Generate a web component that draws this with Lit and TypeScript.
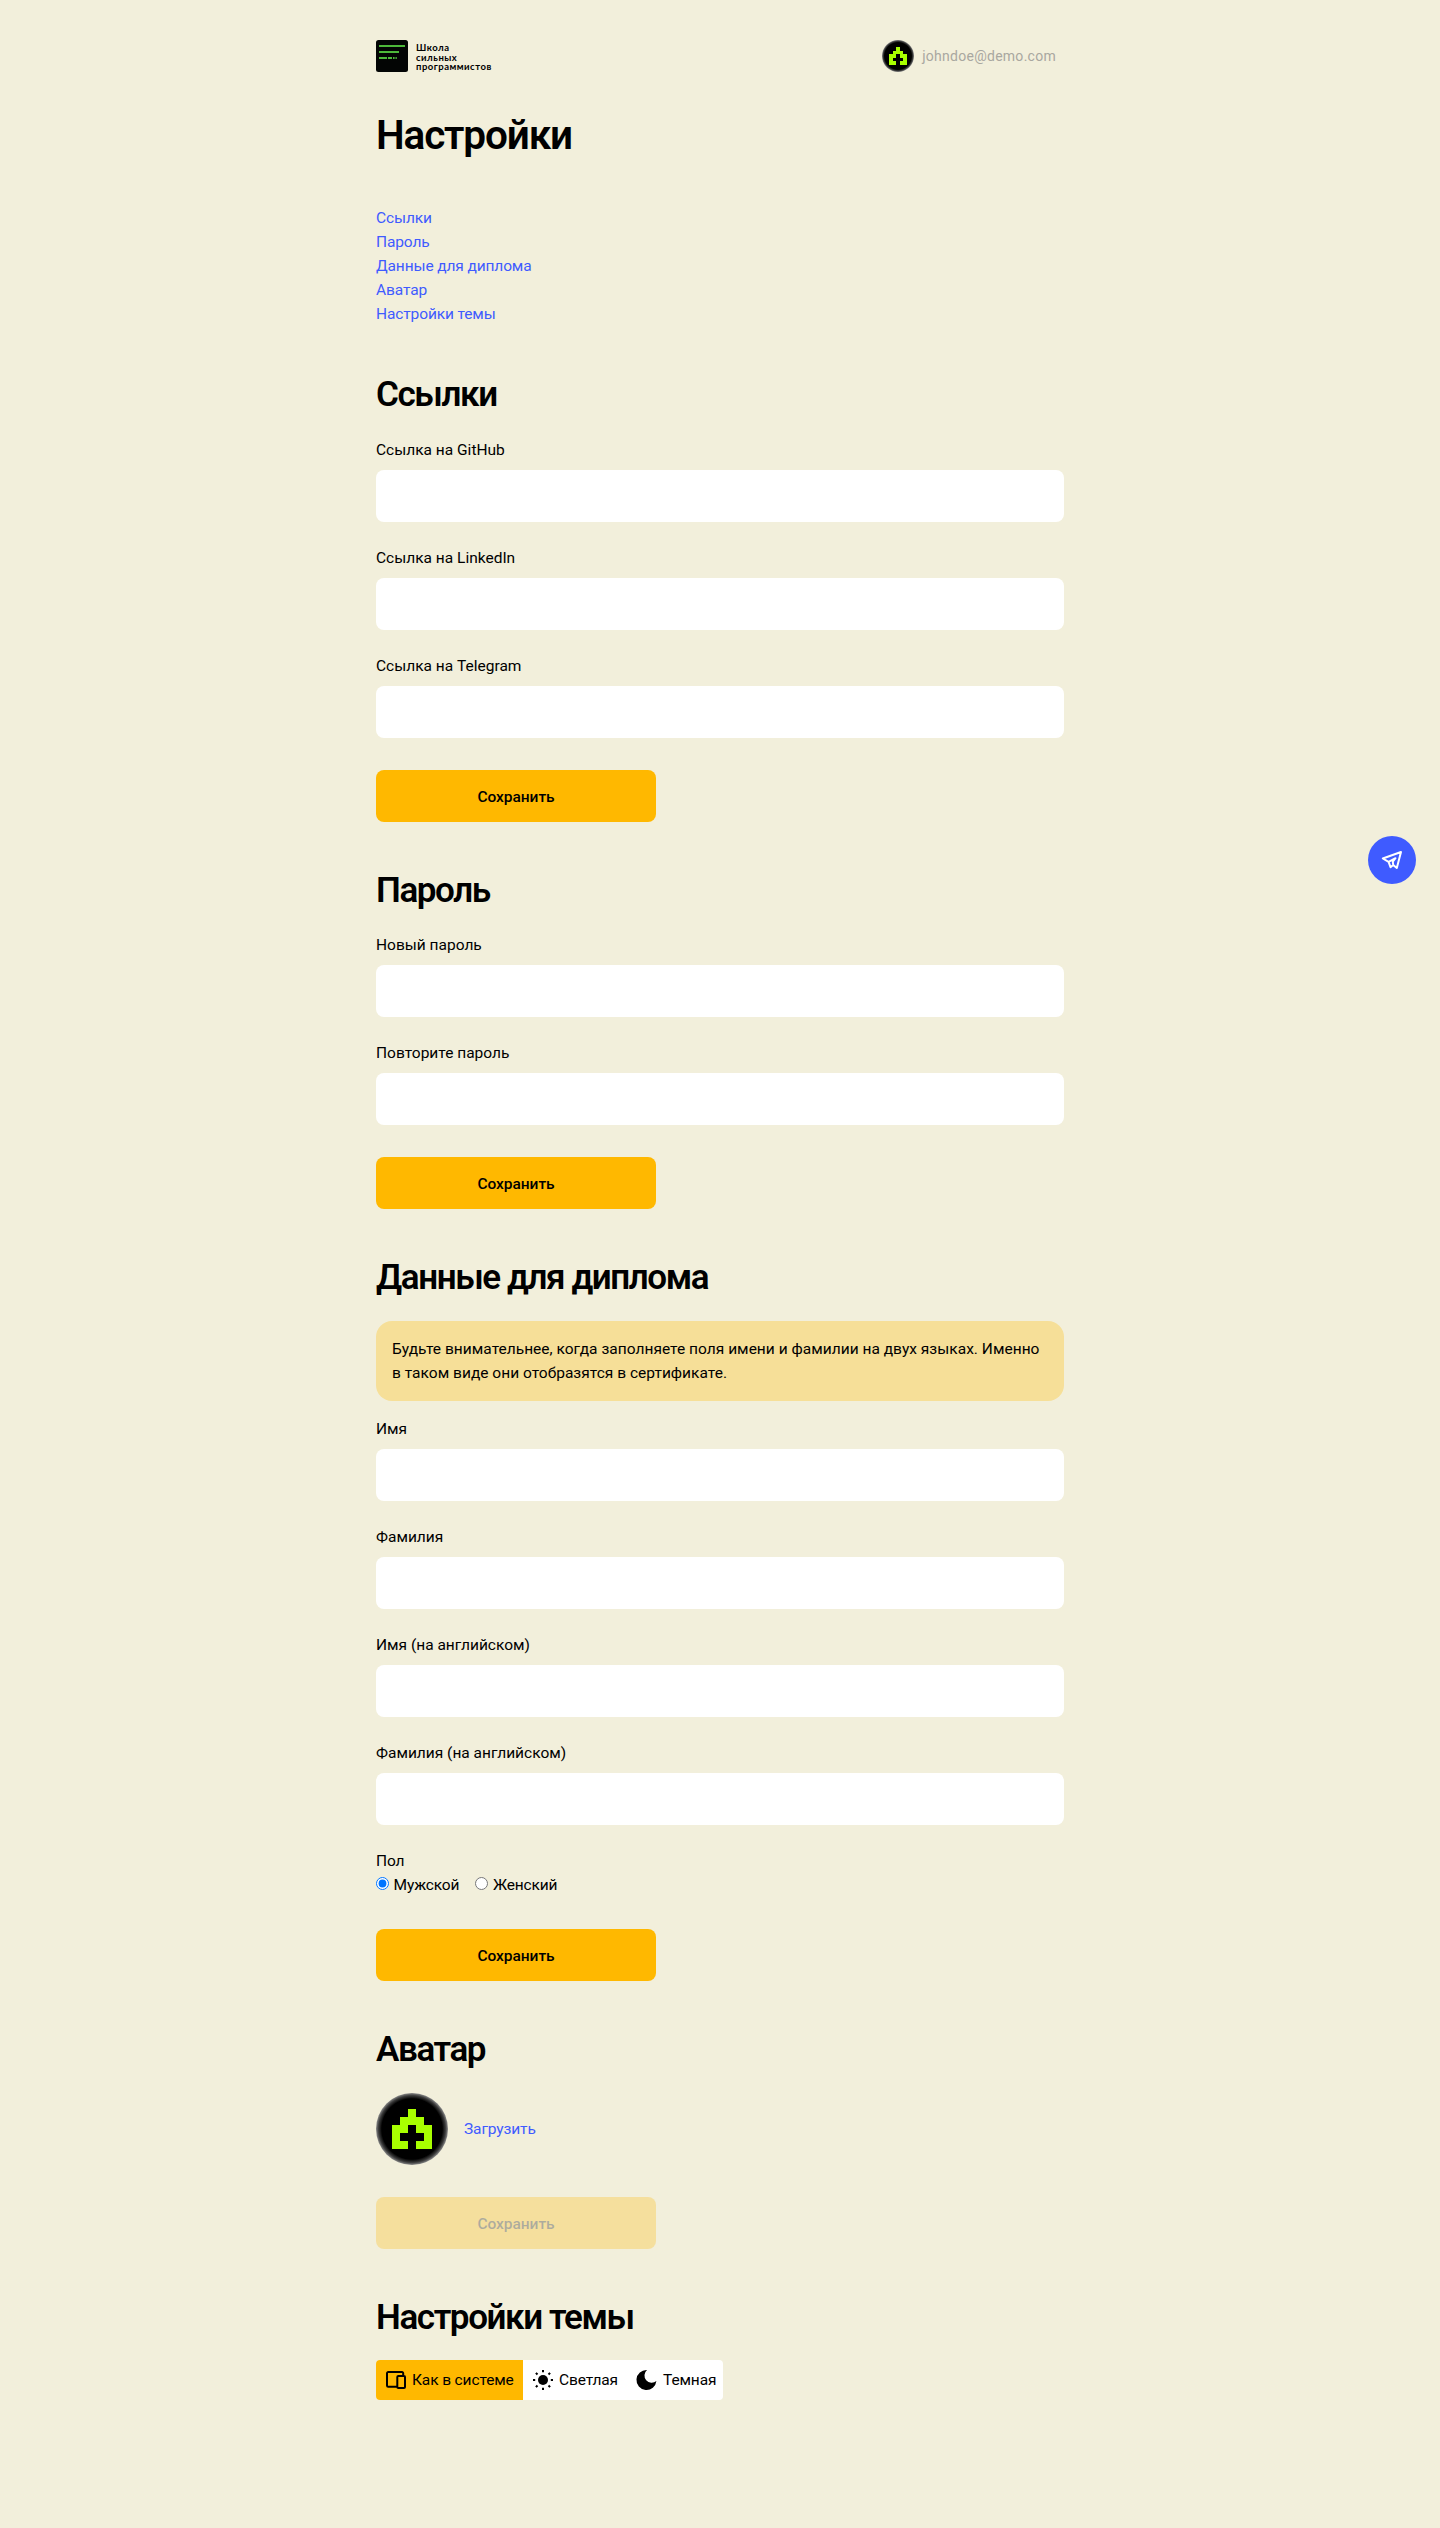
import { LitElement, html, css, svg } from "lit";
import { customElement, property, state } from "lit/decorators.js";
import { classMap } from "lit/directives/class-map.js";

@customElement("user-avatar")
class UserAvatar extends LitElement {
  static styles = css`
    :host { display: block; }
    .pic { display: block; width: 100%; height: 100%; }
  `;
  render() {
    return html`<svg class="pic" viewBox="0 0 72 72">
      <defs>
        <radialGradient id="edge">
          <stop offset="0.84" stop-color="#000" />
          <stop offset="0.93" stop-color="#3c3c3c" />
          <stop offset="1" stop-color="#8a8a8a" />
        </radialGradient>
      </defs>
      <circle cx="36" cy="36" r="36" fill="url(#edge)" />
      <path fill="#a8ff00" shape-rendering="crispEdges"
        d="M32 16h8v8h8v8h8v24H40v-8h8v-8h-8v-8h-8v8h-8v8h8v8H16V32h8v-8h8z" />
    </svg>`;
  }
}

@customElement("text-field")
class TextField extends LitElement {
  @property() label = "";
  @property() type = "text";
  static styles = css`
    :host { display: block; letter-spacing: 0; }
    .field { display: flex; flex-direction: column; gap: 8px; }
    .input {
      box-sizing: border-box; width: 100%; height: 52px; padding: 0 16px;
      border: 0; border-radius: 8px; background: #fff; font: inherit; outline: none;
    }
  `;
  render() {
    return html`<label class="field">${this.label}<input class="input" type=${this.type} /></label>`;
  }
}

const themes = [
  {
    label: "Как в системе",
    icon: svg`<path fill="none" stroke="#000" stroke-width="2" d="M13.500 18.800H4.200A1.200 1.200 0 0 1 3 17.600V5.200A1.200 1.200 0 0 1 4.200 4H18A1.200 1.200 0 0 1 19.200 5.200V7.500M14.300 8H20a1 1 0 0 1 1 1v10a1 1 0 0 1-1 1h-5.700a1 1 0 0 1-1-1V9a1 1 0 0 1 1-1z"/>`,
  },
  {
    label: "Светлая",
    icon: svg`<circle cx="12" cy="12" r="5"/><path stroke="#000" stroke-width="2" d="M12 2v2.200M12 19.800V22M2 12h2.200M19.800 12H22M4.900 4.900l1.600 1.600M17.500 17.500l1.600 1.600M4.900 19.100l1.600-1.600M17.500 6.500l1.600-1.600"/>`,
  },
  {
    label: "Темная",
    icon: svg`<path d="M12 2a7 7 0 0 0 9.400 11A10 10 0 1 1 12 2z"/>`,
  },
];

@customElement("app-root")
class AppRoot extends LitElement {
  @state() theme = 0;

  static styles = css`
    :host {
      display: block; position: relative; box-sizing: border-box; min-height: 2528px;
      background: #f2efdb; color: #000;
      font: 400 15.5px/24px Roboto, "Liberation Sans", sans-serif; letter-spacing: -0.12px;
    }
    .page { width: 688px; margin: 0 auto; padding-top: 40px; }
    .header { display: flex; justify-content: space-between; align-items: center; height: 32px; padding-right: 8px; }
    .brand { display: flex; align-items: center; gap: 8px; }
    .mark { display: block; width: 32px; height: 32px; }
    .name { font: 700 9.5px/9.8px Lato, sans-serif; letter-spacing: 0.5px; white-space: pre; padding-top: 3px; }
    .user { display: flex; align-items: center; gap: 8px; color: #a9a7a0; font-size: 14px; letter-spacing: 0.27px; }
    .small { width: 32px; height: 32px; }
    .title { margin: 0; padding: 39px 0 47.2px; font: 600 40.5px/48px Roboto, sans-serif; letter-spacing: -1.15px; }
    .toc { display: flex; flex-direction: column; align-items: flex-start; }
    .link { color: #3f5bff; text-decoration: none; }
    .section { display: flex; flex-direction: column; margin-top: 48px; }
    .heading { margin: 0 0 23px; padding-top: 1px; font: 600 35px/39.6px Roboto, sans-serif; letter-spacing: -1.4px; }
    .fields { display: flex; flex-direction: column; gap: 24px; }
    .save {
      width: 280px; height: 52px; margin-top: 32px; padding: 2px 0 0; border: 0; border-radius: 8px;
      background: #ffb800; color: #000; font: inherit; font-weight: 500; letter-spacing: -0.05px;
    }
    .save:disabled { opacity: 0.28; }
    .note { padding: 16px; margin-bottom: 16px; border-radius: 16px; background: #f6df98; letter-spacing: 0.02px; }
    .radios { display: flex; gap: 16px; }
    .radio { display: flex; gap: 4.500px; }
    .dot { width: 13px; height: 13px; margin: 4px 0 0; }
    .upload { display: flex; align-items: center; gap: 16px; }
    .big { width: 72px; height: 72px; }
    .themes {
      display: grid; grid-template-columns: 147px 104px 96px; align-self: flex-start;
      height: 40px; border-radius: 4px; overflow: hidden; background: #fff;
    }
    .theme { display: flex; align-items: center; gap: 4px; padding: 0 0 0 8px; border: 0; background: none; color: #000; font: inherit; letter-spacing: inherit; white-space: nowrap; }
    .active { background: #ffb800; }
    .icon { display: block; width: 24px; height: 24px; }
    .chat {
      position: absolute; top: 836px; right: 24px; width: 48px; height: 48px; border-radius: 50%;
      background: #3f5bff; display: flex; align-items: center; justify-content: center;
    }
  `;

  section(title: string, body: unknown) {
    return html`<section class="section"><h2 class="heading">${title}</h2>${body}</section>`;
  }

  fields(labels: string[], type = "text") {
    return labels.map((l) => html`<text-field label=${l} type=${type}></text-field>`);
  }

  render() {
    const save = html`<button class="save">Сохранить</button>`;
    return html`
      <main class="page">
        <header class="header">
          <div class="brand">
            <svg class="mark" viewBox="0 0 32 32">
              <rect width="32" height="32" rx="2.500" fill="#030504" />
              <path stroke="#4db83a" stroke-width="2" d="M3 6h26M3 12h20M3 18h8M12 18h4M17 18h1.600M19.500 18h1.300" />
            </svg>
            <div class="name">Школа
сильных
программистов</div>
          </div>
          <div class="user"><user-avatar class="small"></user-avatar><span>johndoe@demo.com</span></div>
        </header>
        <h1 class="title">Настройки</h1>
        <nav class="toc">
          ${["Ссылки", "Пароль", "Данные для диплома", "Аватар", "Настройки темы"].map(
            (t) => html`<a class="link" href="#">${t}</a>`
          )}
        </nav>
        ${this.section("Ссылки", html`
          <div class="fields">${this.fields(["Ссылка на GitHub", "Ссылка на LinkedIn", "Ссылка на Telegram"])}</div>${save}`)}
        ${this.section("Пароль", html`
          <div class="fields">${this.fields(["Новый пароль", "Повторите пароль"], "password")}</div>${save}`)}
        ${this.section("Данные для диплома", html`
          <div class="note">Будьте внимательнее, когда заполняете поля имени и фамилии на двух языках. Именно в&nbsp;таком виде они отобразятся в сертификате.</div>
          <div class="fields">
            ${this.fields(["Имя", "Фамилия", "Имя (на английском)", "Фамилия (на английском)"])}
            <div>
              <div>Пол</div>
              <div class="radios">
                <label class="radio"><input class="dot" type="radio" name="gender" checked />Мужской</label>
                <label class="radio"><input class="dot" type="radio" name="gender" />Женский</label>
              </div>
            </div>
          </div>${save}`)}
        ${this.section("Аватар", html`
          <div class="upload"><user-avatar class="big"></user-avatar><a class="link" href="#">Загрузить</a></div>
          <button class="save" disabled>Сохранить</button>`)}
        ${this.section("Настройки темы", html`
          <div class="themes">
            ${themes.map((t, i) => html`<button
              class=${classMap({ theme: true, active: this.theme === i })}
              @click=${() => (this.theme = i)}
            ><svg class="icon" viewBox="0 0 24 24">${t.icon}</svg>${t.label}</button>`)}
          </div>`)}
      </main>
      <a class="chat" href="#"><svg class="icon" viewBox="0 0 24 24" fill="none" stroke="#fff" stroke-width="2" stroke-linejoin="round">
        <path d="M2.800 10.500L21 4L16.800 20L13.200 17L10.500 19.200L8.600 13.800zM8.600 13.800L15.500 10.200L12.800 13.500L13.200 17" />
      </svg></a>
    `;
  }
}
